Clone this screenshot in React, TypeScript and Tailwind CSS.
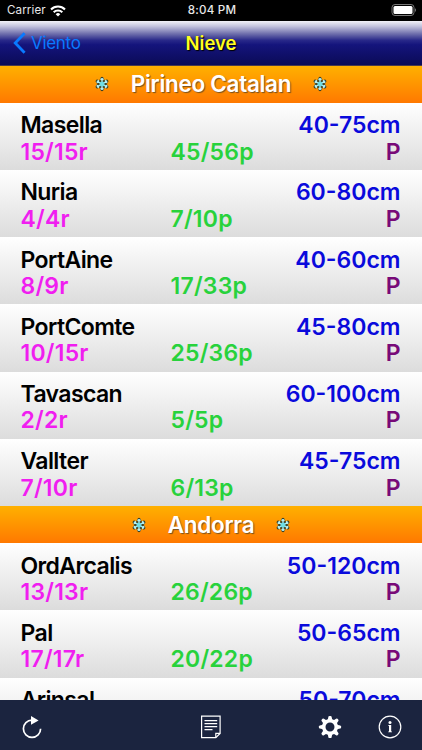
import { Fragment } from 'react';

type Resort = { name: string; depth: string; runs: string; slopes: string; quality: string };

const regions: { name: string; resorts: Resort[] }[] = [
  {
    name: 'Pirineo Catalan',
    resorts: [
      { name: 'Masella', depth: '40-75cm', runs: '15/15r', slopes: '45/56p', quality: 'P' },
      { name: 'Nuria', depth: '60-80cm', runs: '4/4r', slopes: '7/10p', quality: 'P' },
      { name: 'PortAine', depth: '40-60cm', runs: '8/9r', slopes: '17/33p', quality: 'P' },
      { name: 'PortComte', depth: '45-80cm', runs: '10/15r', slopes: '25/36p', quality: 'P' },
      { name: 'Tavascan', depth: '60-100cm', runs: '2/2r', slopes: '5/5p', quality: 'P' },
      { name: 'Vallter', depth: '45-75cm', runs: '7/10r', slopes: '6/13p', quality: 'P' },
    ],
  },
  {
    name: 'Andorra',
    resorts: [
      { name: 'OrdArcalis', depth: '50-120cm', runs: '13/13r', slopes: '26/26p', quality: 'P' },
      { name: 'Pal', depth: '50-65cm', runs: '17/17r', slopes: '20/22p', quality: 'P' },
      { name: 'Arinsal', depth: '50-70cm', runs: '', slopes: '', quality: '' },
    ],
  },
];

function StatusBar() {
  return (
    <div className="grid h-[20.5px] shrink-0 grid-cols-3 items-center bg-black pr-[5px] pl-[7px] text-[11.6px] leading-none text-[#e8e8e8]">
      <div className="flex items-center gap-[4px] pt-px">
        <span className="tracking-[0.1px]">Carrier</span>
        <svg width="16" height="12" viewBox="0 0 16 12" fill="none" stroke="#fff" strokeWidth="2.1">
          <path d="M1 4.4a10 10 0 0 1 14 0" />
          <path d="M3.7 7.2a6.1 6.1 0 0 1 8.6 0" />
          <path d="M8 11.6 5.7 9.2a3.3 3.3 0 0 1 4.6 0Z" fill="#fff" stroke="none" />
        </svg>
      </div>
      <span className="pt-[2px] text-center font-medium tracking-[0.2px]">8:04 PM</span>
      <svg className="justify-self-end" width="26" height="12" viewBox="0 0 26 12">
        <rect x="1" y=".5" width="22" height="11" rx="3" fill="none" stroke="#777" />
        <rect x="2.5" y="2" width="19" height="8" rx="1.5" fill="#fff" />
        <path d="M24 4.2c1.2.5 1.2 3.1 0 3.6Z" fill="#888" />
      </svg>
    </div>
  );
}

function NavBar() {
  return (
    <header className="grid h-[45px] shrink-0 grid-cols-3 items-center border-b border-[#4a3a4c] bg-[linear-gradient(#f2f2f8_0%,#c3c3dd_12%,#7474af_28%,#282889_44%,#14147c_54%,#0b0b56_100%)]">
      <button className="flex items-center gap-[5px] pl-[13px] text-[17px] tracking-[-0.3px] text-[#0a7aff]">
        <svg width="13" height="22" viewBox="0 0 13 22" fill="none" stroke="currentColor" strokeWidth="2.8">
          <path d="M11.6 1.2 2.2 11l9.4 9.8" />
        </svg>
        <span className="pt-[2px]">Viento</span>
      </button>
      <h1 className="pt-[2px] text-center text-[18.5px] font-semibold text-[#ffff20] [text-shadow:1px_1px_1px_#000]">Nieve</h1>
    </header>
  );
}

function Snowflake() {
  const arm = 'M8 8V2M6.5 2.7 8 4.3l1.5-1.6';
  const angles = [0, 60, 120, 180, 240, 300];
  return (
    <svg width="16" height="16" viewBox="0 0 16 16" fill="none" strokeLinejoin="round">
      <g stroke="#35402a" strokeWidth="3.1" strokeLinecap="round">
        {angles.map((angle) => <path key={angle} d="M8 8V2.4" transform={`rotate(${angle} 8 8)`} />)}
      </g>
      <g stroke="#35402a" strokeWidth="2.6">
        {angles.map((angle) => <path key={angle} d={arm} transform={`rotate(${angle} 8 8)`} />)}
      </g>
      <g stroke="#b4f0f2" strokeWidth="1.25">
        {angles.map((angle) => <path key={angle} d={arm} transform={`rotate(${angle} 8 8)`} />)}
      </g>
      <circle cx="8" cy="8" r="2.5" fill="#6fdde4" />
    </svg>
  );
}

function RegionHeader({ name }: { name: string }) {
  return (
    <div className="flex h-[37.3px] shrink-0 items-center justify-center gap-[20.5px] bg-[linear-gradient(#ffb000,#ff7900)]">
      <Snowflake />
      <h2 className="text-[22.5px] font-semibold tracking-[-0.3px] whitespace-nowrap text-white [text-shadow:1px_1px_1px_#78501e]">{name}</h2>
      <Snowflake />
    </div>
  );
}

function ResortRow({ resort }: { resort: Resort }) {
  return (
    <div className="h-[67.2px] shrink-0 bg-[linear-gradient(#fff,#dcdcdc)] pt-[9.4px] pr-[21.5px] pl-[20.5px] text-[23px] leading-[26.5px] font-[560]">
      <div className="flex justify-between">
        <span className="tracking-[-0.6px] text-black">{resort.name}</span>
        <span className="text-[#0a0adc]">{resort.depth}</span>
      </div>
      <div className="grid grid-cols-[150px_1fr_auto]">
        <span className="tracking-[0.2px] text-[#f01ef0]">{resort.runs}</span>
        <span className="tracking-[0.2px] text-[#28d23c]">{resort.slopes}</span>
        <span className="text-[#780a78]">{resort.quality}</span>
      </div>
    </div>
  );
}

function Toolbar() {
  return (
    <footer className="flex h-[50px] shrink-0 items-start bg-[#1b243f] pt-[15px] pl-[21px] text-white">
      <button aria-label="Recargar">
        <svg width="22" height="25" viewBox="0 0 22 25" fill="none" stroke="currentColor" strokeWidth="1.7">
          <path d="M11 5.1a8.6 8.6 0 1 0 8.6 8.6" />
          <path d="m10 1 7.6 4.4L10 9.8Z" fill="currentColor" stroke="none" />
        </svg>
      </button>
      <button className="ml-[157px]" aria-label="Notas">
        <svg width="22" height="25" viewBox="0 0 22 25" fill="none" stroke="currentColor" strokeWidth="1.2">
          <path d="M1.6 1.2h18.5v17.2l-4.3 4.3H1.6Z" />
          <path d="M20.1 18.4h-4.3v4.3M4.5 5.7h12.7M4.5 8.7h12.7M4.5 11.7h12.7M4.5 14.7h8" />
        </svg>
      </button>
      <button className="ml-[96px]" aria-label="Ajustes">
        <svg width="24" height="24" viewBox="0 0 24 24" fill="currentColor">
          <path fillRule="evenodd" d="M12 4a8 8 0 1 0 0 16 8 8 0 0 0 0-16Zm0 3.5a4.5 4.5 0 1 1 0 9 4.5 4.5 0 0 1 0-9Z" />
          {[0, 45, 90, 135, 180, 225, 270, 315].map((angle) => (
            <path key={angle} d="m9.7 5.1.7-3.3q.2-.9 1.1-.9h1q.9 0 1.1.9l.7 3.3Z" transform={`rotate(${angle} 12 12)`} />
          ))}
        </svg>
      </button>
      <button className="ml-9" aria-label="Información">
        <svg width="24" height="24" viewBox="0 0 24 24" fill="none" stroke="currentColor">
          <circle cx="12" cy="12" r="10.8" strokeWidth="1.2" />
          <circle cx="12" cy="7.4" r="1.5" fill="currentColor" stroke="none" />
          <path d="M10.2 10h3v6.4h.8v.8h-3.8v-.8h.8v-5.6h-.8Z" fill="currentColor" stroke="none" />
        </svg>
      </button>
    </footer>
  );
}

export default function App() {
  return (
    <main className="flex h-[750px] w-[422px] flex-col overflow-hidden bg-white font-['Inter',sans-serif]">
      <StatusBar />
      <NavBar />
      <div className="flex min-h-0 flex-1 flex-col overflow-hidden">
        {regions.map((region) => (
          <Fragment key={region.name}>
            <RegionHeader name={region.name} />
            {region.resorts.map((resort) => <ResortRow key={resort.name} resort={resort} />)}
          </Fragment>
        ))}
      </div>
      <Toolbar />
    </main>
  );
}
